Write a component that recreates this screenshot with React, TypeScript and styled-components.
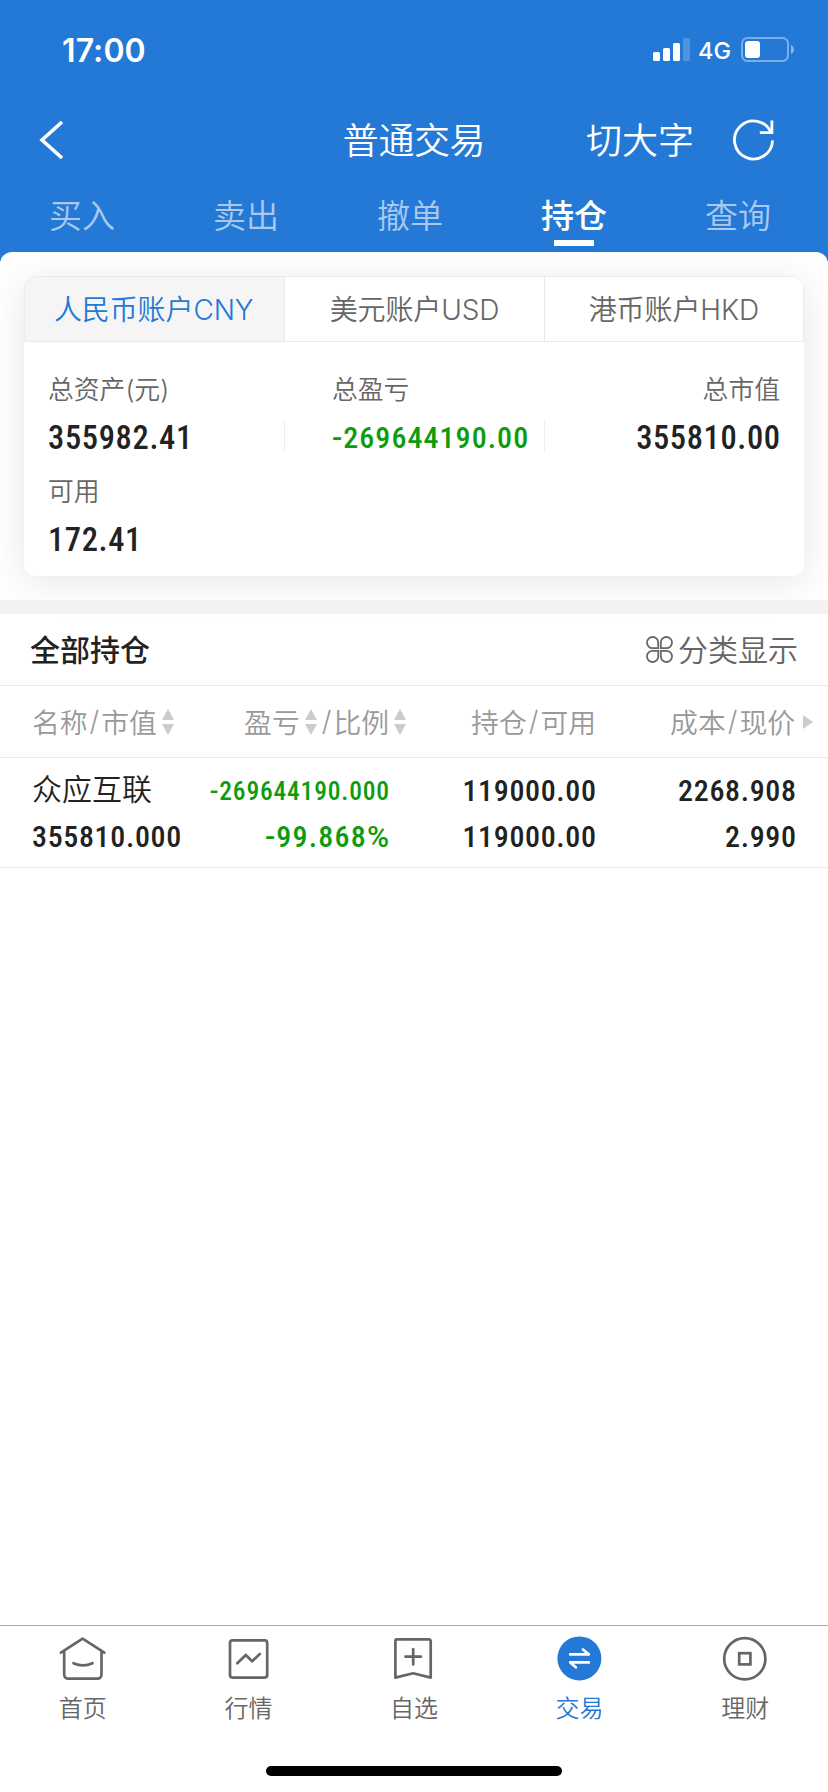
import React from "react";
import styled, { createGlobalStyle } from "styled-components";

const BLUE = "#2479d6";
const GREEN = "#0d9c0d";
const CJK = `"Inter", "Noto Sans CJK SC", sans-serif`;

const GlobalStyle = createGlobalStyle`
  *, *::before, *::after { box-sizing: border-box; }
  body { margin: 0; background: #fff; font-family: ${CJK}; font-weight: 350; color: #222; }
`;

const Screen = styled.div`
  width: 828px;
  height: 1792px;
  display: flex;
  flex-direction: column;
  background: #fff;
  overflow: hidden;
`;

const Header = styled.header`
  height: 264px;
  flex: none;
  background: ${BLUE};
  color: #fff;
`;

const StatusBar = styled.div`
  height: 99px;
  padding: 0 34px 0 62px;
  display: flex;
  align-items: center;
  justify-content: space-between;
`;

const Clock = styled.span`
  margin-top: 2px;
  font-size: 32px;
  font-weight: 600;
  line-height: 40px;
  letter-spacing: 0.1px;
`;

const StatusIcons = styled.div`
  display: flex;
  align-items: center;
`;

const Network = styled.span`
  margin: 2px 10px 0 8px;
  font-size: 23.5px;
  font-weight: 500;
  line-height: 28px;
`;

const NavBar = styled.div`
  height: 82px;
  display: grid;
  grid-template-columns: 1fr auto 1fr;
  align-items: center;
  padding: 0 53px 0 39px;
  font-size: 36px;
`;

const NavTitle = styled.h1`
  margin: 1px 0 0 14px;
  font: inherit;
  line-height: 52px;
  letter-spacing: -0.4px;
`;

const NavActions = styled.div`
  display: flex;
  align-items: center;
  justify-content: flex-end;
  gap: 39px;
  line-height: 52px;

  span { margin-top: 1px; }
`;

const TradeTabs = styled.nav`
  height: 71px;
  display: grid;
  grid-template-columns: repeat(5, 164px);
`;

const TradeTab = styled.a<{ $active?: boolean }>`
  display: flex;
  flex-direction: column;
  align-items: center;
  padding-top: 11px;
  font-size: 33px;
  line-height: 48px;
  font-weight: ${(p) => (p.$active ? 500 : 350)};
  color: ${(p) => (p.$active ? "#fff" : "#a9c9ef")};

  &::after {
    content: "";
    width: 40px;
    height: 6px;
    background: ${(p) => (p.$active ? "#fff" : "transparent")};
  }
`;

const Sheet = styled.section`
  margin-top: -12px;
  height: 348px;
  flex: none;
  padding: 24px;
  border-radius: 12px 12px 0 0;
  background: #fff;
`;

const Card = styled.div`
  height: 300px;
  border-radius: 12px;
  background: #fff;
  box-shadow: 0 6px 40px rgba(0, 0, 0, 0.1);
`;

const AccountTabs = styled.div`
  height: 66px;
  display: grid;
  grid-template-columns: repeat(3, 1fr);
  border: 1px solid #ebebeb;
  border-radius: 12px 12px 0 0;
  overflow: hidden;
`;

const AccountTab = styled.div<{ $active?: boolean }>`
  display: flex;
  align-items: center;
  justify-content: center;
  padding: 0 2px 3px 0;
  font-size: 28px;
  letter-spacing: -0.1px;
  color: ${(p) => (p.$active ? BLUE : "#666")};
  background: ${(p) => (p.$active ? "#f5f5f5" : "#fff")};

  & + & {
    border-left: 1px solid #e8e8e8;
    padding-right: 0;
  }
`;

const Summary = styled.div`
  display: grid;
  grid-template-columns: 260px 260px 260px;
  grid-template-rows: 102px 102px;
  padding-top: 27px;
`;

const Stat = styled.div<{ $align?: string; $pad?: string }>`
  display: flex;
  flex-direction: column;
  align-items: ${(p) => p.$align ?? "flex-start"};
  padding: ${(p) => p.$pad ?? "0 24px"};
  background: linear-gradient(#ececec, #ececec) no-repeat
    ${(p) => (p.$pad || p.$align ? "0 52px / 1px 30px" : "0 0 / 0 0")};
`;

const StatLabel = styled.span`
  font-size: 25.8px;
  line-height: 40px;
  padding-top: 1px;
  margin-bottom: -1px;
  color: #666;
`;

const Num = styled.span<{ $size?: number; $gap?: number; $green?: boolean }>`
  font-family: Roboto, sans-serif;
  font-weight: 500;
  font-stretch: 75%;
  font-size: ${(p) => p.$size ?? 30}px;
  letter-spacing: ${(p) => p.$gap ?? 0.65}px;
  margin-right: ${(p) => -(p.$gap ?? 0.65)}px;
  color: ${(p) => (p.$green ? GREEN : "#222")};
  white-space: nowrap;
`;

const WideSign = styled.span`
  font-stretch: 100%;
`;

const StatValue = styled.div`
  height: 58px;
  line-height: 58px;
`;

const Divider = styled.div`
  height: 14px;
  flex: none;
  background: #f2f2f2;
`;

const ListHead = styled.div`
  height: 72px;
  flex: none;
  display: flex;
  align-items: center;
  justify-content: space-between;
  padding: 0 30px 0 30px;
  border-bottom: 1px solid #ececec;
  font-size: 30px;
`;

const ListTitle = styled.h2`
  margin: -3px 0 0;
  font-size: 30px;
  font-weight: 500;
`;

const Classify = styled.div`
  display: flex;
  align-items: center;
  gap: 5px;
  color: #666;

  span { margin-top: -3px; }
`;

const GridRow = styled.div<{ $height: number }>`
  height: ${(p) => p.$height}px;
  flex: none;
  display: grid;
  grid-template-columns: 180px 177px 207px 200px;
  padding-left: 32px;
  border-bottom: 1px solid #ececec;
`;

const HeadCell = styled.div<{ $right?: boolean; $shift?: number }>`
  display: flex;
  align-items: center;
  justify-content: ${(p) => (p.$right ? "flex-end" : "flex-start")};
  margin-right: ${(p) => -(p.$shift ?? 0)}px;
  padding-bottom: 2px;
  font-size: 27.8px;
  color: #999;
  white-space: nowrap;

  svg { flex: none; margin-top: 2px; }
`;

const Slash = styled.span`
  margin: 0 2px;
`;

const Cell = styled.div<{ $right?: boolean }>`
  display: flex;
  flex-direction: column;
  align-items: ${(p) => (p.$right ? "flex-end" : "flex-start")};
  padding-top: 10px;
  line-height: 46px;
`;

const StockName = styled.span`
  font-size: 30px;
  height: 46px;
  line-height: 43px;
`;

const Blank = styled.main`
  flex: 1;
`;

const BottomBar = styled.nav`
  height: 141px;
  display: grid;
  grid-template-columns: repeat(5, 1fr);
  border-top: 1px solid #aaa;
  padding-top: 9px;
`;

const BottomItem = styled.a<{ $active?: boolean }>`
  display: flex;
  flex-direction: column;
  align-items: center;
  font-size: 24px;
  line-height: 36px;
  color: ${(p) => (p.$active ? BLUE : "#666")};

  svg { margin-bottom: 8px; }
`;

const HomeIndicator = styled.div`
  width: 296px;
  height: 10px;
  margin: 0 auto 16px;
  flex: none;
  border-radius: 5px;
  background: #000;
`;

const SignalIcon = () => (
  <svg width="37" height="24" viewBox="0 0 37 24" fill="#fff">
    <rect x="0" y="14" width="7" height="9" rx="1.5" />
    <rect x="10" y="10" width="7" height="13" rx="1.5" />
    <rect x="20" y="5" width="7" height="18" rx="1.5" />
    <rect x="30" y="0" width="7" height="23" rx="1.5" opacity="0.2" />
  </svg>
);

const BatteryIcon = () => (
  <svg width="53" height="25" viewBox="0 0 53 25">
    <rect x="1" y="1" width="46" height="23" rx="5.5" fill="none" stroke="#fff" strokeWidth="2" opacity="0.4" />
    <rect x="4" y="4" width="15" height="17" rx="3" fill="#fff" />
    <path d="M50 8q3 1.500 3 4.500t-3 4.500z" fill="#fff" opacity="0.45" />
  </svg>
);

const BackIcon = () => (
  <svg width="26" height="40" viewBox="0 0 26 40" fill="none" stroke="#fff" strokeWidth="3.6">
    <path d="M23 2 3 20l20 18" />
  </svg>
);

const RefreshIcon = () => (
  <svg width="42" height="42" viewBox="0 0 42 42" fill="none" stroke="#fff" strokeWidth="2.800">
    <path d="M39.500 21.500A19 19 0 1 1 38 13.500" />
    <path d="M38.900 1.500v12.200H26.800" />
  </svg>
);

const SortGlyph = styled.svg`
  margin-left: 5px;
  margin-right: 3px;

  &:last-child { margin-right: 0; }
`;

const SortIcon = () => (
  <SortGlyph width="12" height="26" viewBox="0 0 12 26" fill="#ccc">
    <path d="M6 0l6 11H0zM0 15h12L6 26z" />
  </SortGlyph>
);

const CloverIcon = () => (
  <svg width="27" height="27" viewBox="0 0 27 27" fill="none" stroke="#666" strokeWidth="1.800">
    <path d="M12.200 12.200H6.600A5.600 5.600 0 1 1 12.200 6.600zM14.800 12.200V6.600A5.600 5.600 0 1 1 20.400 12.200zM12.200 14.800v5.600A5.600 5.600 0 1 1 6.600 14.800zM14.800 14.800h5.600A5.600 5.600 0 1 1 14.800 20.400z" />
  </svg>
);

const MoreIcon = () => (
  <svg width="18" height="14" viewBox="0 0 18 14" fill="#ccc">
    <path d="M8 0l10 7-10 7z" />
  </svg>
);

const iconProps = {
  width: 48,
  height: 48,
  viewBox: "0 0 48 48",
  fill: "none",
  stroke: "currentColor",
  strokeWidth: 2.7,
  strokeLinecap: "round" as const,
  strokeLinejoin: "round" as const,
};

const HomeIcon = () => (
  <svg {...iconProps}>
    <path d="M1.900 17.700 23.600 3.600l21.700 14.100M5.200 17v22.600a4 4 0 0 0 4 4h29.300a4 4 0 0 0 4-4V17M14.500 28.200q9.500 4.500 19 0" />
  </svg>
);

const MarketIcon = () => (
  <svg {...iconProps}>
    <rect x="6" y="5.400" width="37.200" height="37.200" rx="2.500" />
    <path d="M13.300 28.300l8.500-8.300 6.300 6.300 7.700-7.300" />
  </svg>
);

const WatchIcon = () => (
  <svg {...iconProps}>
    <path d="M6.900 4.400h32.300a1.500 1.500 0 0 1 1.500 1.500v36.700l-17.600-4.300L5.400 42.600V5.900A1.500 1.500 0 0 1 6.900 4.400zM15.500 21.700H30.900M23.200 14v15.500" />
  </svg>
);

const TradeIcon = () => (
  <svg {...iconProps}>
    <circle cx="23.400" cy="23.400" r="22" fill={BLUE} stroke="none" />
    <path d="M14.200 19.400h18.600l-5.800-4.900M32.800 27.400H14.200l5.600 4.900" stroke="#fff" />
  </svg>
);

const WealthIcon = () => (
  <svg {...iconProps} strokeLinejoin="miter">
    <circle cx="23.800" cy="23.800" r="20.600" />
    <rect x="18.200" y="18.200" width="11.200" height="11.200" />
  </svg>
);

const bottomItems = [
  { label: "首页", Icon: HomeIcon },
  { label: "行情", Icon: MarketIcon },
  { label: "自选", Icon: WatchIcon },
  { label: "交易", Icon: TradeIcon, active: true },
  { label: "理财", Icon: WealthIcon },
];

export default function App() {
  return (
    <Screen>
      <GlobalStyle />
      <Header>
        <StatusBar>
          <Clock>17:00</Clock>
          <StatusIcons>
            <SignalIcon />
            <Network>4G</Network>
            <BatteryIcon />
          </StatusIcons>
        </StatusBar>
        <NavBar>
          <BackIcon />
          <NavTitle>普通交易</NavTitle>
          <NavActions>
            <span>切大字</span>
            <RefreshIcon />
          </NavActions>
        </NavBar>
        <TradeTabs>
          {["买入", "卖出", "撤单", "持仓", "查询"].map((t) => (
            <TradeTab key={t} $active={t === "持仓"}>{t}</TradeTab>
          ))}
        </TradeTabs>
      </Header>

      <Sheet>
        <Card>
          <AccountTabs>
            <AccountTab $active>人民币账户CNY</AccountTab>
            <AccountTab>美元账户USD</AccountTab>
            <AccountTab>港币账户HKD</AccountTab>
          </AccountTabs>
          <Summary>
            <Stat>
              <StatLabel>总资产(元)</StatLabel>
              <StatValue><Num $size={32.5} $gap={0.65}>355982.41</Num></StatValue>
            </Stat>
            <Stat $pad="0 0 0 48px">
              <StatLabel>总盈亏</StatLabel>
              <StatValue><Num $green $gap={1.05}><WideSign>-</WideSign>269644190.00</Num></StatValue>
            </Stat>
            <Stat $align="flex-end">
              <StatLabel>总市值</StatLabel>
              <StatValue><Num $size={32.5} $gap={0.6}>355810.00</Num></StatValue>
            </Stat>
            <Stat>
              <StatLabel>可用</StatLabel>
              <StatValue><Num $size={32.5} $gap={0.6}>172.41</Num></StatValue>
            </Stat>
          </Summary>
        </Card>
      </Sheet>
      <Divider />

      <ListHead>
        <ListTitle>全部持仓</ListTitle>
        <Classify>
          <CloverIcon />
          <span>分类显示</span>
        </Classify>
      </ListHead>
      <GridRow $height={72}>
        <HeadCell>名称<Slash>/</Slash>市值<SortIcon /></HeadCell>
        <HeadCell $right $shift={17}>盈亏<SortIcon /><Slash>/</Slash>比例<SortIcon /></HeadCell>
        <HeadCell $right>持仓<Slash>/</Slash>可用</HeadCell>
        <HeadCell $right $shift={17}>成本<Slash>/</Slash>现价<MoreIcon /></HeadCell>
      </GridRow>
      <GridRow $height={110}>
        <Cell>
          <StockName>众应互联</StockName>
          <Num>355810.000</Num>
        </Cell>
        <Cell $right>
          <Num $green $size={25.5} $gap={0.8}><WideSign>-</WideSign>269644190.000</Num>
          <Num $green $gap={1.2}><WideSign>-</WideSign>99.868<WideSign>%</WideSign></Num>
        </Cell>
        <Cell $right>
          <Num>119000.00</Num>
          <Num>119000.00</Num>
        </Cell>
        <Cell $right>
          <Num>2268.908</Num>
          <Num>2.990</Num>
        </Cell>
      </GridRow>

      <Blank />

      <BottomBar>
        {bottomItems.map(({ label, Icon, active }) => (
          <BottomItem key={label} $active={active}>
            <Icon />
            {label}
          </BottomItem>
        ))}
      </BottomBar>
      <HomeIndicator />
    </Screen>
  );
}
